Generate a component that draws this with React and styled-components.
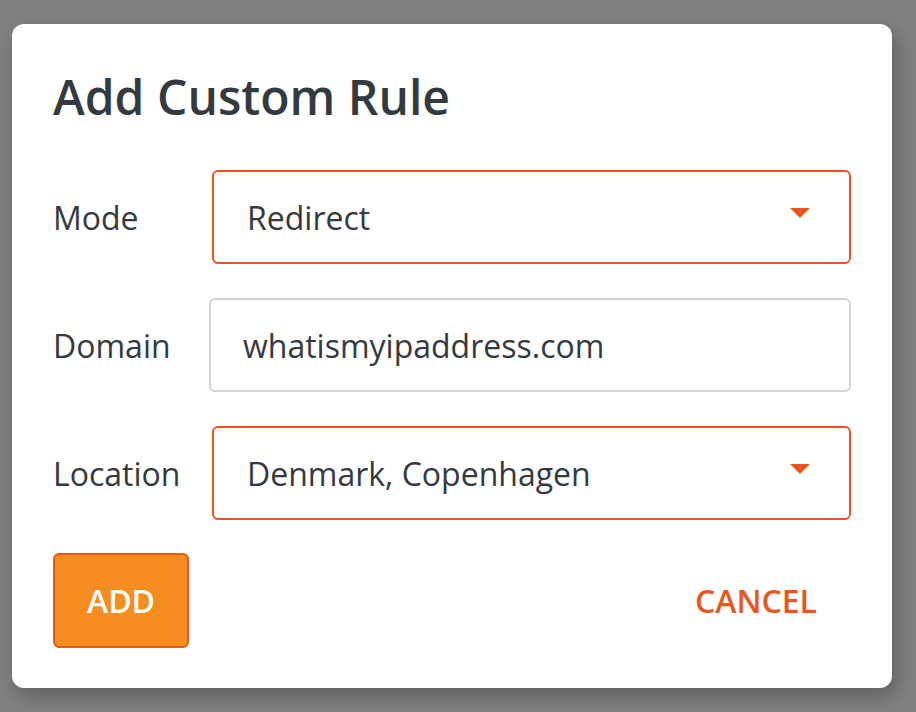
import React, { useState } from 'react'
import styled, { createGlobalStyle } from 'styled-components'

const GlobalStyle = createGlobalStyle`
    html, body {
        margin: 0;
        padding: 0;
        background: #808080;
        font-family: "Open Sans", "Noto Sans", sans-serif;
    }
`;

const Page = styled.div`
    width: 916px;
    height: 712px;
    padding: 24px 24px 0 12px;
    box-sizing: border-box;
`;

const Dialog = styled.div`
    width: 880px;
    height: 664px;
    box-sizing: border-box;
    background: #fff;
    border-radius: 12px;
    box-shadow: 4px 8px 18px rgba(0, 0, 0, 0.25);
    padding: 42px 41px 40px 41px;
    display: flex;
    flex-direction: column;
`;

const Title = styled.h1`
    margin: 0 0 42px 0;
    font-size: 48px;
    line-height: 62px;
    font-weight: 600;
    color: #333a40;
`;

const Row = styled.div`
    display: flex;
    align-items: center;
    margin-bottom: 34px;
`;

const Label = styled.label`
    width: 156px;
    flex-shrink: 0;
    font-size: 32px;
    color: #343a40;
`;

const Field = styled.div`
    flex: 1;
    height: 94px;
    box-sizing: border-box;
    margin-left: ${p => (p.$select ? '3px' : '0')};
    border: 2px solid ${p => (p.$select ? '#e8571f' : '#d3d3d3')};
    border-radius: 6px;
    display: flex;
    align-items: center;
    justify-content: space-between;
    padding: 0 39px 0 ${p => (p.$select ? '33px' : '32px')};
    font-size: 32px;
    color: #343a40;
    cursor: ${p => (p.$select ? 'pointer' : 'text')};
`;

const Arrow = styled.span`
    width: 0;
    height: 0;
    border-left: 10px solid transparent;
    border-right: 10px solid transparent;
    border-top: 10px solid #e8571f;
    margin-top: -8px;
`;

const Actions = styled.div`
    display: flex;
    justify-content: space-between;
    align-items: center;
    margin-top: -1px;
`;

const AddButton = styled.button`
    width: 136px;
    height: 95px;
    background: #f68d21;
    border: 2px solid #e8571f;
    border-radius: 6px;
    color: #fff;
    font-family: inherit;
    font-size: 32px;
    font-weight: 600;
    cursor: pointer;
`;

const CancelButton = styled.button`
    background: none;
    border: none;
    color: #e8571f;
    font-family: inherit;
    font-size: 32px;
    font-weight: 600;
    padding: 0;
    margin-right: 34px;
    cursor: pointer;
`;

const SelectField = ({ value }) => (
    <Field $select>
        <span>{value}</span>
        <Arrow />
    </Field>
)

const App = () => {
    const [mode] = useState('Redirect');
    const [domain] = useState('whatismyipaddress.com');
    const [location] = useState('Denmark, Copenhagen');

    return (
        <>
            <GlobalStyle />
            <Page>
                <Dialog>
                    <Title>Add Custom Rule</Title>
                    <Row>
                        <Label>Mode</Label>
                        <SelectField value={mode} />
                    </Row>
                    <Row>
                        <Label>Domain</Label>
                        <Field>{domain}</Field>
                    </Row>
                    <Row>
                        <Label>Location</Label>
                        <SelectField value={location} />
                    </Row>
                    <Actions>
                        <AddButton>ADD</AddButton>
                        <CancelButton>CANCEL</CancelButton>
                    </Actions>
                </Dialog>
            </Page>
        </>
    )
}

export default App
